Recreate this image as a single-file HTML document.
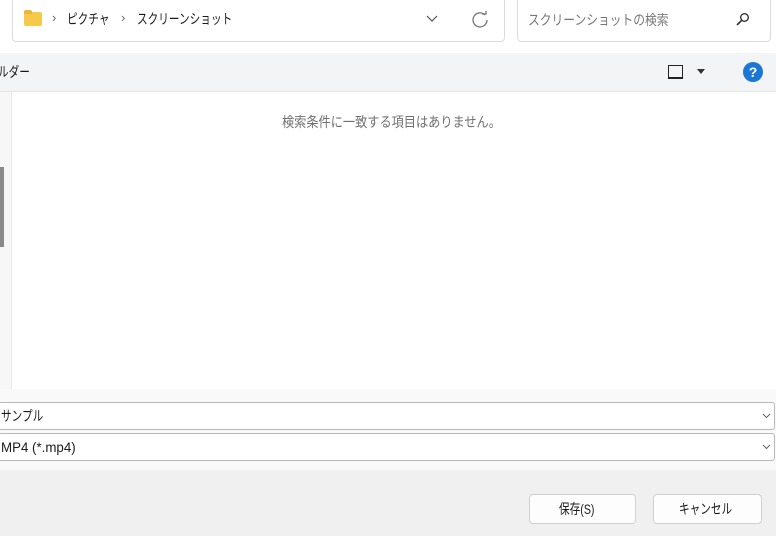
<!DOCTYPE html>
<html><head><meta charset="utf-8"><style>
body{margin:0;width:776px;height:536px;overflow:hidden;position:relative;background:#fff;font-family:"Liberation Sans","Noto Sans CJK JP",sans-serif;font-size:14px;color:#1a1a1a}
.a{position:absolute}
.n{transform:scaleX(0.76);transform-origin:0 0;white-space:nowrap}
.box{position:absolute;background:#fff;border:1px solid #dcdcdc;box-sizing:border-box}
.in{position:absolute;left:-2px;width:777px;height:28px;background:#fff;border:1px solid #b8b8b8;border-radius:3px;box-sizing:border-box}
.btn{position:absolute;top:494px;height:30px;background:#fdfdfd;border:1px solid #d0d0d0;border-radius:4px;box-sizing:border-box}
</style></head><body>
<div class="box" style="left:12px;top:-2px;width:493px;height:44px;border-radius:0 0 4px 4px"></div>
<div class="a" style="left:24px;top:12px;width:18px;height:14px;background:#f7c948;border-radius:2px"></div>
<div class="a" style="left:24px;top:10px;width:8px;height:4px;background:#e8b63a;border-radius:2px 2px 0 0"></div>
<div class="a" style="left:52px;top:10px;color:#666;font-size:13px">›</div>
<div class="a n" style="left:67px;top:9px">ピクチャ</div>
<div class="a" style="left:121px;top:10px;color:#666;font-size:13px">›</div>
<div class="a n" style="left:137px;top:9px">スクリーンショット</div>
<svg class="a" style="left:426px;top:15px" width="12" height="8"><path d="M1 1l5 5 5-5" stroke="#555" fill="none" stroke-width="1.2"/></svg>
<svg class="a" style="left:471px;top:11px" width="18" height="18"><path d="M14 4A7 7 0 1 0 16 9" stroke="#777" fill="none" stroke-width="1.3"/><path d="M11 3h4V0" stroke="#777" fill="none" stroke-width="1.3"/></svg>
<div class="box" style="left:517px;top:-2px;width:254px;height:44px;border-radius:0 0 4px 4px"></div>
<div class="a n" style="left:528px;top:10px;color:#777;transform:scaleX(0.84)">スクリーンショットの検索</div>
<svg class="a" style="left:736px;top:12px" width="14" height="14"><circle cx="8.5" cy="5.5" r="3.8" stroke="#333" fill="none" stroke-width="1.4"/><path d="M6 8l-5 5" stroke="#333" stroke-width="1.6"/></svg>
<div class="a" style="left:0;top:53px;width:776px;height:38px;background:#f3f4f6;border-bottom:1px solid #e5e5e5"></div>
<div class="a n" style="left:-2px;top:62px">ルダー</div>
<div class="a" style="left:668px;top:65px;width:13px;height:11px;border:1.5px solid #222;border-bottom-width:2px"></div>
<svg class="a" style="left:697px;top:69px" width="8" height="5"><path d="M0 0h8L4 5z" fill="#333"/></svg>
<div class="a" style="left:743px;top:62px;width:20px;height:20px;border-radius:50%;background:#1a78d4;color:#fff;text-align:center;line-height:20px;font-size:14px;font-weight:bold">?</div>
<div class="a" style="left:0;top:92px;width:11px;height:297px;background:#f7f7f7;border-right:1px solid #e8e8e8"></div>
<div class="a" style="left:0;top:167px;width:4px;height:80px;background:#8a8a8a"></div>
<div class="a n" style="left:282px;top:112px;color:#6f6f6f;transform:scaleX(0.87)">検索条件に一致する項目はありません。</div>
<div class="a" style="left:0;top:389px;width:776px;height:81px;background:#f9f9f9"></div>
<div class="in" style="top:402px"></div>
<div class="a n" style="left:1px;top:406px">サンプル</div>
<div class="in" style="top:433px"></div>
<div class="a" style="left:1px;top:439px;font-size:14px;transform:scaleX(0.95);transform-origin:0 0">MP4 (*.mp4)</div>
<svg class="a" style="left:762px;top:413px" width="9" height="6"><path d="M1 1l3.5 3.5L8 1" stroke="#666" fill="none"/></svg>
<svg class="a" style="left:762px;top:444px" width="9" height="6"><path d="M1 1l3.5 3.5L8 1" stroke="#666" fill="none"/></svg>
<div class="a" style="left:0;top:470px;width:776px;height:66px;background:#f0f0f0"></div>
<div class="btn" style="left:529px;width:107px"></div>
<div class="a n" style="left:559px;top:499px">保存(S)</div>
<div class="btn" style="left:653px;width:109px"></div>
<div class="a n" style="left:679px;top:499px">キャンセル</div>
</body></html>
